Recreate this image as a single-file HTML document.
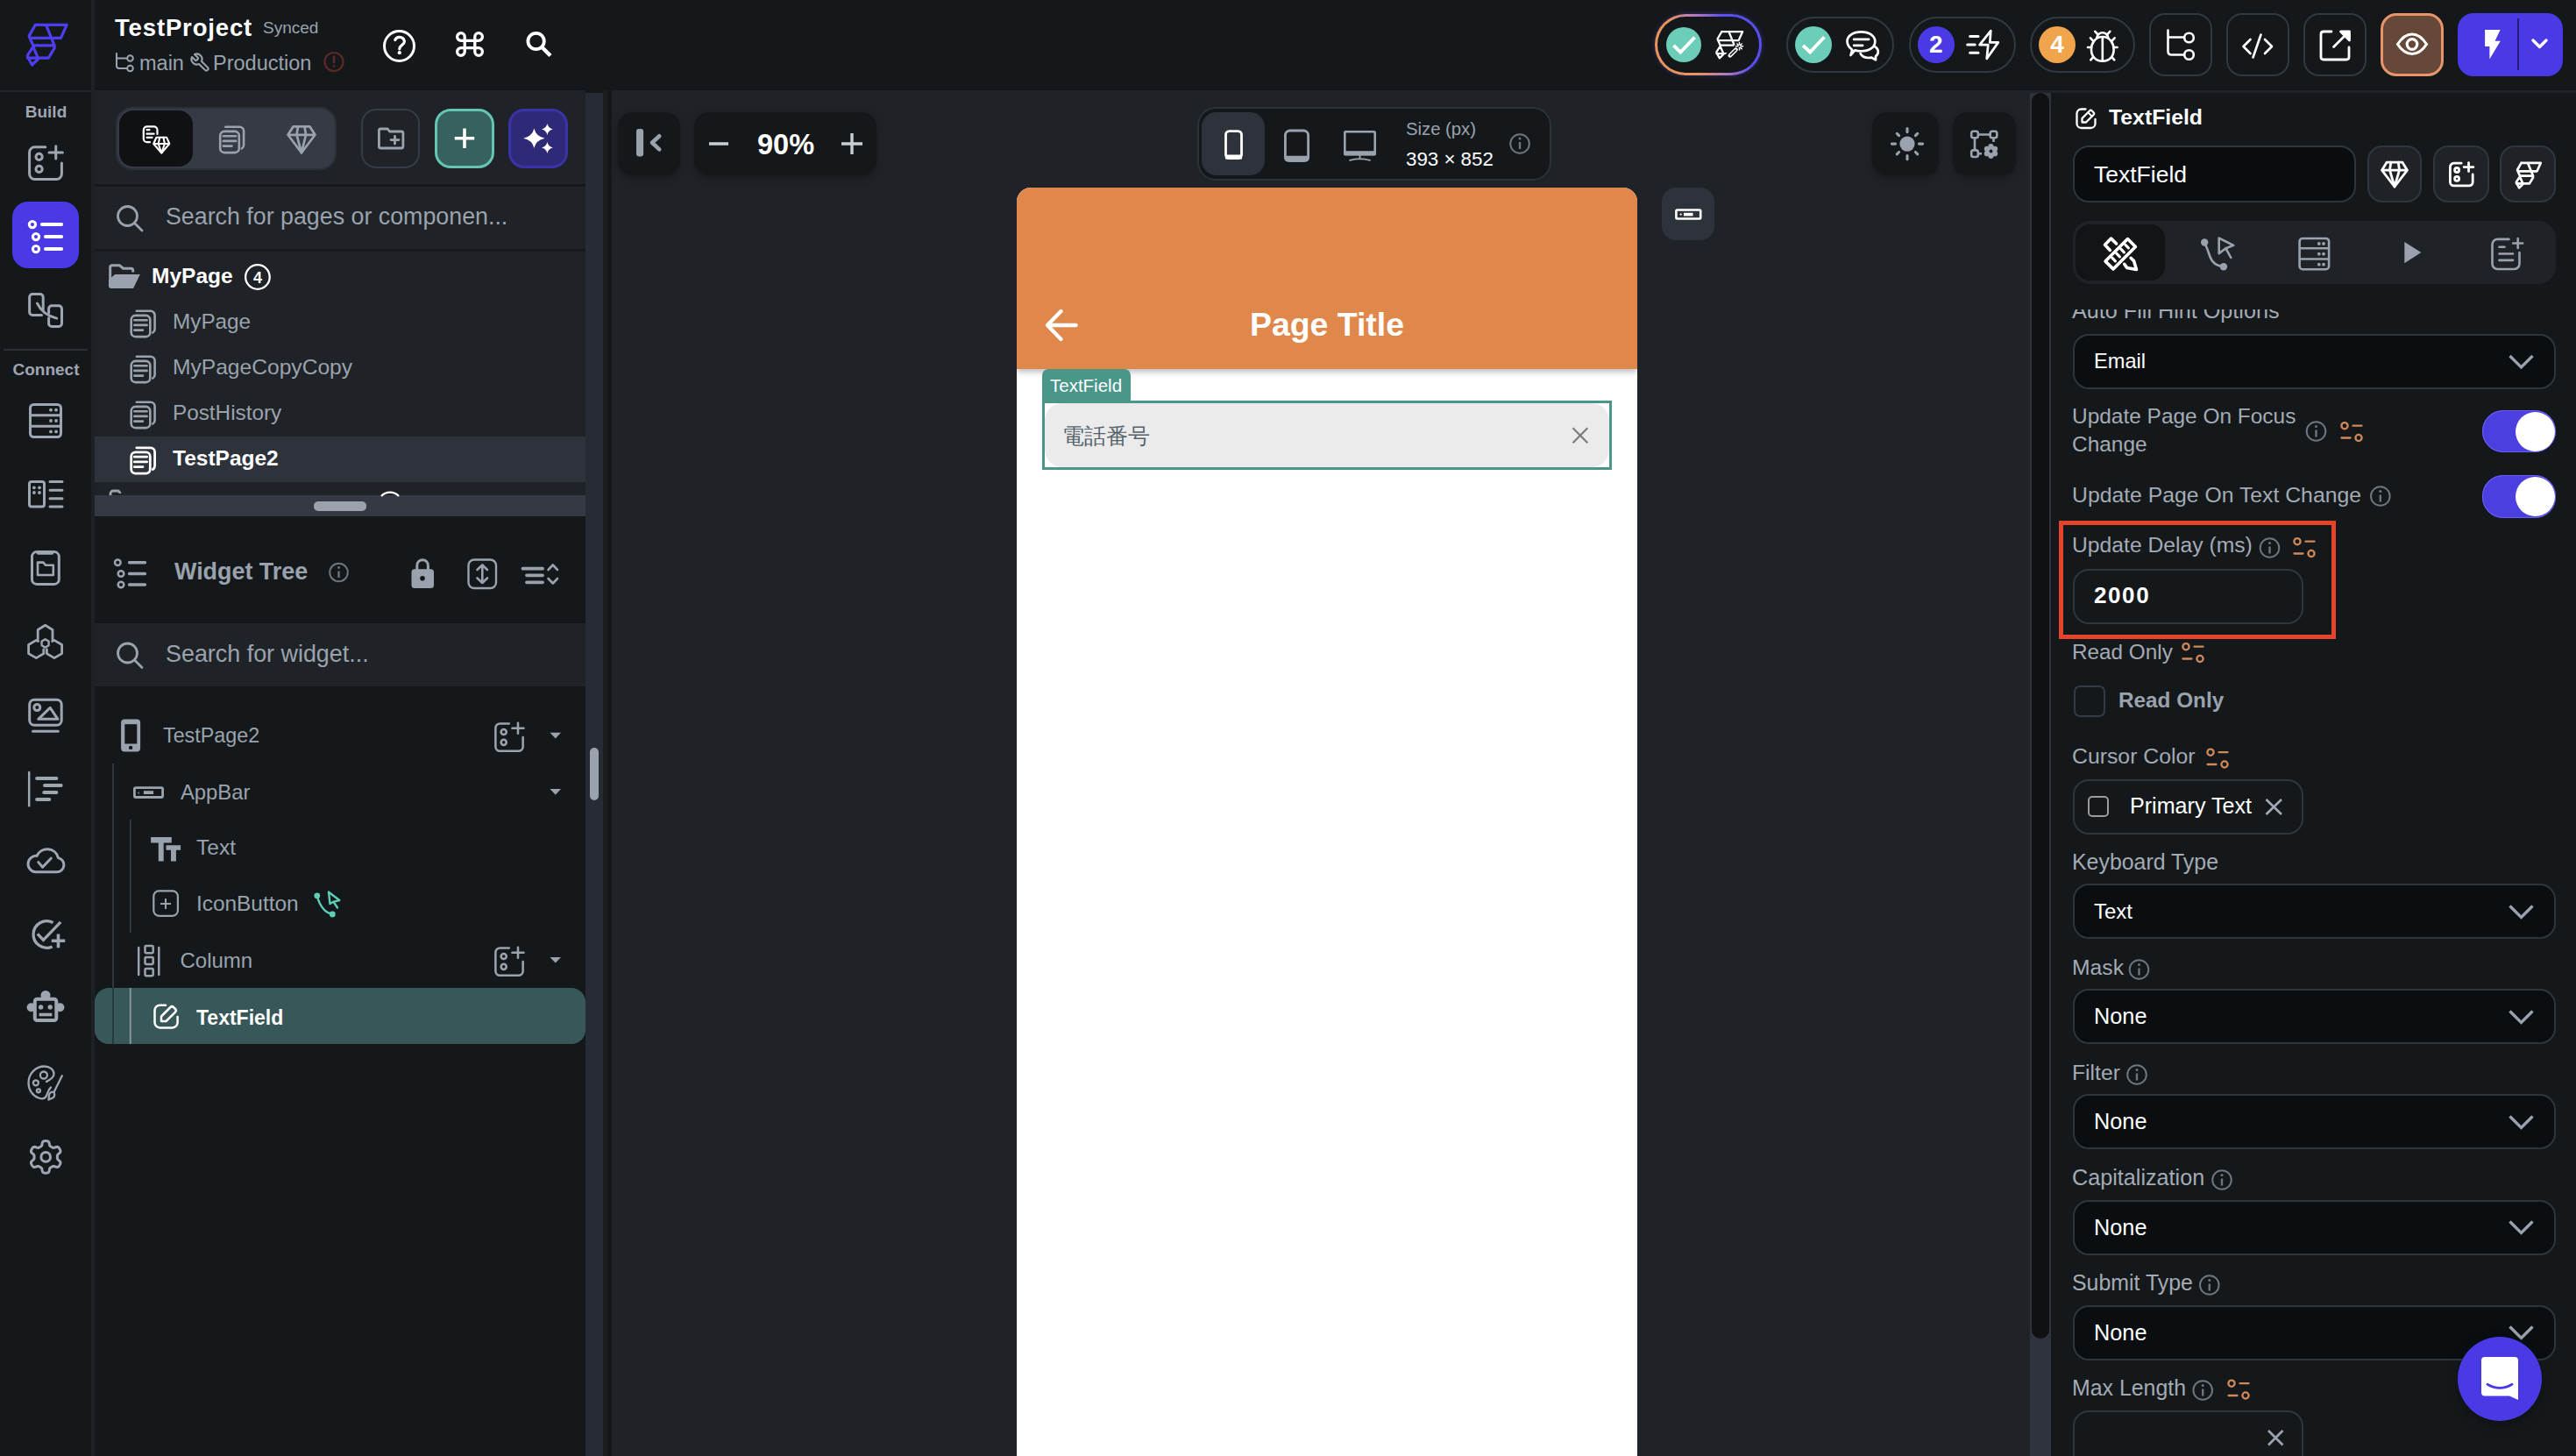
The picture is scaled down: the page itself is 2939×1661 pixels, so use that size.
<!DOCTYPE html>
<html><head><meta charset="utf-8">
<style>
*{box-sizing:border-box;margin:0;padding:0}
html,body{width:2939px;height:1661px;overflow:hidden;background:#15181b;font-family:"Liberation Sans",sans-serif;color:#fff}
.a{position:absolute}
.t{position:absolute;white-space:nowrap;line-height:1}
svg{position:absolute;overflow:visible}
.ic{fill:none;stroke:#9aa3ad;stroke-width:2.6;stroke-linecap:round;stroke-linejoin:round}
.icw{fill:none;stroke:#fff;stroke-width:2.6;stroke-linecap:round;stroke-linejoin:round}
.btn{position:absolute;border-radius:18px}
.lbl{position:absolute;white-space:nowrap;line-height:1;color:#a3abb4;font-size:24px}
.dd{position:absolute;left:2364.5px;width:551px;height:63px;background:#0b0e11;border:2px solid #30353c;border-radius:18px}
.ddt{position:absolute;left:23px;top:20px;font-size:25px;color:#fff;line-height:1;white-space:nowrap}
</style></head><body>

<!-- backgrounds -->
<div class="a" style="left:0;top:0;width:2939px;height:103px;background:#15181b"></div>
<div class="a" style="left:104px;top:0;width:4px;height:1661px;background:#1d2024"></div>
<div class="a" style="left:0;top:103px;width:104px;height:2px;background:#23272c"></div>
<!-- pages panel -->
<div class="a" style="left:108px;top:103px;width:560px;height:462px;background:#1f2226"></div>
<div class="a" style="left:108px;top:565px;width:560px;height:24px;background:#343944"></div>
<div class="a" style="left:108px;top:589px;width:560px;height:1072px;background:#15181b"></div>
<div class="a" style="left:108px;top:711px;width:560px;height:72px;background:#1f2327"></div>
<!-- left scroll strip -->
<div class="a" style="left:668px;top:106px;width:20px;height:1555px;background:#272b34"></div>
<div class="a" style="left:688px;top:103px;width:4.5px;height:1558px;background:#1c1f22"></div>
<!-- canvas -->
<div class="a" style="left:698px;top:103px;width:1618px;height:1558px;background:#1f2226"></div>
<!-- right scroll strip -->
<div class="a" style="left:2316px;top:103px;width:24px;height:3px;background:#1f2226"></div><div class="a" style="left:2316px;top:106px;width:24px;height:1555px;background:#2e333c"></div>
<div class="a" style="left:2318px;top:106px;width:20px;height:1421px;background:#0f1113;border-radius:10px"></div>
<!-- right panel -->
<div class="a" style="left:2340px;top:103px;width:599px;height:1558px;background:#15181b"></div>
<div class="a" style="left:2340px;top:103px;width:599px;height:3px;background:#1f2226"></div>



<!-- ===== RAIL ===== -->
<div class="t" style="left:0;top:117.9px;width:104px;text-align:center;font-size:19px;font-weight:bold;color:#9ea6b1;padding-left:1px">Build</div>
<svg style="left:0;top:0" width="10" height="10"><g fill="none" stroke="#9ea6b1" stroke-width="3" stroke-linecap="round" stroke-linejoin="round">
<path d="M51.8 167.7H39.6a6 6 0 0 0-6 6V198.5a6 6 0 0 0 6 6H64.4a6 6 0 0 0 6-6V186"/><circle cx="44.6" cy="178.9" r="3.6"/><circle cx="44.6" cy="192.9" r="3.6"/><path d="M63.75 166.8V181M56 173.9H71.4"/></g></svg>
<div class="a" style="left:14px;top:230px;width:76px;height:76px;border-radius:18px;background:#4a3ae6"></div>
<svg style="left:0;top:0" width="10" height="10"><g fill="none" stroke="#fff" stroke-linecap="round"><circle cx="36.95" cy="256.1" r="3.6" stroke-width="3.1"/><circle cx="41" cy="270.1" r="3.6" stroke-width="3.1"/><circle cx="41" cy="284.1" r="3.6" stroke-width="3.1"/><path d="M48 256H70.1M52 270H70.1M52 284H70.1" stroke-width="4.1"/></g></svg>
<svg style="left:0;top:0" width="10" height="10"><g fill="none" stroke="#9ea6b1" stroke-width="3" stroke-linecap="round" stroke-linejoin="round">
<path d="M49.2 353.4V339a3.5 3.5 0 0 0-3.5-3.5H37.15a3.5 3.5 0 0 0-3.5 3.5V355.9a3.5 3.5 0 0 0 3.5 3.5H47.5"/>
<path d="M55.6 357V352.3a3.5 3.5 0 0 1 3.5-3.5H67a3.5 3.5 0 0 1 3.5 3.5V368.9a3.5 3.5 0 0 1-3.5 3.5H59.1a3.5 3.5 0 0 1-3.5-3.5V362.7"/>
<path d="M42.5 346.2Q49 359.5 64.6 363.1"/></g></svg>
<div class="a" style="left:4px;top:398px;width:96px;height:2px;background:#2c3036"></div>
<div class="t" style="left:0;top:411.9px;width:104px;text-align:center;font-size:19px;font-weight:bold;color:#9ea6b1;padding-left:1px">Connect</div>
<svg style="left:0;top:0" width="10" height="10"><g fill="none" stroke="#9ea6b1" stroke-width="3" stroke-linecap="round" stroke-linejoin="round">
<rect x="34.5" y="461.5" width="35" height="37" rx="4"/><path d="M34.5 473.8H69.5M34.5 486.2H69.5"/></g>
<g fill="#9ea6b1"><circle cx="58" cy="467.7" r="1.9"/><circle cx="64" cy="467.7" r="1.9"/><circle cx="58" cy="480" r="1.9"/><circle cx="64" cy="480" r="1.9"/><circle cx="58" cy="492.4" r="1.9"/><circle cx="64" cy="492.4" r="1.9"/></g></svg>
<svg style="left:0;top:0" width="10" height="10"><g fill="none" stroke="#9ea6b1" stroke-width="3" stroke-linecap="round" stroke-linejoin="round">
<rect x="33.5" y="549.5" width="17" height="28.5" rx="2.5"/><path d="M57 549.5H71M57 559.2H71M57 568.8H71M57 578H71"/></g>
<g fill="#9ea6b1"><circle cx="38.9" cy="556.3" r="1.9"/><circle cx="45" cy="556.3" r="1.9"/><circle cx="38.9" cy="562" r="1.9"/><circle cx="45" cy="562" r="1.9"/></g></svg>
<svg style="left:0;top:0" width="10" height="10"><g fill="none" stroke="#9ea6b1" stroke-width="3" stroke-linecap="round" stroke-linejoin="round">
<rect x="36.5" y="629.6" width="30.8" height="36.8" rx="5.5"/><path d="M43.5 631H59.5" stroke-width="3.5"/><path d="M43 641.6H49.5L52 644.8H60.8V656H43Z" stroke-width="2.6"/></g></svg>
<svg style="left:0;top:0" width="10" height="10"><g fill="none" stroke="#9ea6b1" stroke-width="2.8" stroke-linecap="round" stroke-linejoin="round">
<path d="M43.2 729.5V718.5L51.6 713.3L60 718.5V729.5"/>
<path d="M43.6 731.6L41.3 730.4L32.6 735.5V745.6L41.3 750.6L49.8 745.6V740.8"/>
<path d="M59.6 731.6L61.9 730.4L70.6 735.5V745.6L61.9 750.6L53.4 745.6V740.8"/>
<path d="M51.6 729.3L55.6 731.6V736.3L51.6 738.6L47.6 736.3V731.6Z" stroke-width="2.4"/></g></svg>
<svg style="left:0;top:0" width="10" height="10"><g fill="none" stroke="#9ea6b1" stroke-width="3" stroke-linecap="round" stroke-linejoin="round">
<rect x="33.7" y="798.2" width="36.5" height="29.1" rx="5.5"/><circle cx="42.3" cy="807.1" r="3.5"/><path d="M43.75 820.3L57.2 807.3L65.9 820.3Z"/><path d="M37.5 834.2H66.3"/></g></svg>
<svg style="left:0;top:0" width="10" height="10"><g fill="none" stroke="#9ea6b1" stroke-linecap="round">
<path d="M33.2 880.9V919.3" stroke-width="2.5"/><path d="M42.1 887.9H64.4M51 896H69.7M50.2 904H64.4M42.1 911.9H56.25" stroke-width="4"/></g></svg>
<svg style="left:0;top:0" width="10" height="10"><g fill="none" stroke="#9ea6b1" stroke-width="3" stroke-linecap="round" stroke-linejoin="round">
<path d="M40.5 994.8H64.5a8.2 8.2 0 0 0 2-16.2a13 13 0 0 0-24.5-2.2a9.2 9.2 0 0 0-1.5 18.4Z"/><path d="M43.75 983.6L48.6 989.3L58.2 979.2"/></g></svg>
<svg style="left:0;top:0" width="10" height="10"><g fill="none" stroke="#9ea6b1" stroke-width="3.3" stroke-linejoin="miter">
<path d="M60.5 1052.5A15.3 15.3 0 1 0 59.6 1080"/><path d="M42.8 1065.3L49.5 1072.3L69.2 1051.8"/><path d="M66.5 1065.5V1081.2M58.8 1073.3H74.2" stroke-width="3.6"/></g></svg>
<svg style="left:0;top:0" width="10" height="10"><g fill="#9ea6b1"><circle cx="35.6" cy="1149.2" r="5"/><circle cx="68.4" cy="1149.2" r="5"/><circle cx="52" cy="1135.5" r="5.5"/></g>
<rect x="39.8" y="1139.8" width="24.5" height="24.2" rx="2.5" fill="#15181b" stroke="#9ea6b1" stroke-width="4"/>
<g fill="#9ea6b1"><circle cx="46.6" cy="1148.9" r="2.7"/><circle cx="57.2" cy="1148.9" r="2.7"/><rect x="44.6" y="1155.7" width="14.8" height="3.6"/></g></svg>
<svg style="left:0;top:0" width="10" height="10"><g fill="none" stroke="#9ea6b1" stroke-width="2.3" stroke-linecap="round" stroke-linejoin="round">
<path d="M58 1240.5c-3 2.5-3.5 6-5 9.5-1.5 3.5-5 4-9 2.5-7-2.7-11.5-9.5-11.5-17 0-11 8.5-19 18-19 6 0 11 3.5 11 8.5 0 5.5-5.5 6.5-8.5 9"/>
<circle cx="49.9" cy="1226.5" r="4"/><circle cx="40.9" cy="1235.3" r="3"/><circle cx="43.9" cy="1244.3" r="2"/>
<path d="M70.8 1227.3L61.5 1246M61.5 1246c-2.5-1-5 .5-5.5 3l-.5 5.5 4.5-2c2-1 3-3 1.5-6.5"/></g></svg>
<svg style="left:0;top:0" width="10" height="10"><g fill="none" stroke="#9ea6b1" stroke-width="3" stroke-linejoin="round"><path d="M52.20 1301.60 L52.68 1301.61 L53.16 1301.64 L53.63 1301.69 L54.10 1301.78 L54.57 1301.91 L55.02 1302.12 L55.43 1302.46 L55.80 1302.98 L56.08 1303.74 L56.28 1304.69 L56.43 1305.63 L56.59 1306.39 L56.79 1306.93 L57.04 1307.29 L57.31 1307.56 L57.60 1307.77 L57.90 1307.95 L58.20 1308.13 L58.50 1308.30 L58.80 1308.47 L59.10 1308.64 L59.40 1308.82 L59.70 1308.99 L60.01 1309.16 L60.33 1309.30 L60.70 1309.41 L61.14 1309.44 L61.70 1309.34 L62.45 1309.10 L63.34 1308.76 L64.25 1308.46 L65.05 1308.33 L65.69 1308.38 L66.19 1308.57 L66.59 1308.86 L66.94 1309.19 L67.25 1309.56 L67.54 1309.94 L67.80 1310.34 L68.05 1310.75 L68.28 1311.17 L68.49 1311.60 L68.68 1312.04 L68.84 1312.49 L68.96 1312.96 L69.00 1313.45 L68.92 1313.98 L68.65 1314.56 L68.13 1315.18 L67.41 1315.82 L66.67 1316.43 L66.09 1316.95 L65.73 1317.39 L65.54 1317.79 L65.45 1318.16 L65.41 1318.51 L65.40 1318.86 L65.40 1319.21 L65.40 1319.55 L65.40 1319.90 L65.40 1320.25 L65.40 1320.59 L65.40 1320.94 L65.41 1321.29 L65.45 1321.64 L65.54 1322.01 L65.73 1322.41 L66.09 1322.85 L66.67 1323.37 L67.41 1323.98 L68.13 1324.62 L68.65 1325.24 L68.92 1325.82 L69.00 1326.35 L68.96 1326.84 L68.84 1327.31 L68.68 1327.76 L68.49 1328.20 L68.28 1328.63 L68.05 1329.05 L67.80 1329.46 L67.54 1329.86 L67.25 1330.24 L66.94 1330.61 L66.59 1330.94 L66.19 1331.23 L65.69 1331.42 L65.05 1331.47 L64.25 1331.34 L63.34 1331.04 L62.45 1330.70 L61.70 1330.46 L61.14 1330.36 L60.70 1330.39 L60.33 1330.50 L60.01 1330.64 L59.70 1330.81 L59.40 1330.98 L59.10 1331.16 L58.80 1331.33 L58.50 1331.50 L58.20 1331.67 L57.90 1331.85 L57.60 1332.03 L57.31 1332.24 L57.04 1332.51 L56.79 1332.87 L56.59 1333.41 L56.43 1334.17 L56.28 1335.11 L56.08 1336.06 L55.80 1336.82 L55.43 1337.34 L55.02 1337.68 L54.57 1337.89 L54.10 1338.02 L53.63 1338.11 L53.16 1338.16 L52.68 1338.19 L52.20 1338.20 L51.72 1338.19 L51.24 1338.16 L50.77 1338.11 L50.30 1338.02 L49.83 1337.89 L49.38 1337.68 L48.97 1337.34 L48.60 1336.82 L48.32 1336.06 L48.12 1335.11 L47.97 1334.17 L47.81 1333.41 L47.61 1332.87 L47.36 1332.51 L47.09 1332.24 L46.80 1332.03 L46.50 1331.85 L46.20 1331.67 L45.90 1331.50 L45.60 1331.33 L45.30 1331.16 L45.00 1330.98 L44.70 1330.81 L44.39 1330.64 L44.07 1330.50 L43.70 1330.39 L43.26 1330.36 L42.70 1330.46 L41.95 1330.70 L41.06 1331.04 L40.15 1331.34 L39.35 1331.47 L38.71 1331.42 L38.21 1331.23 L37.81 1330.94 L37.46 1330.61 L37.15 1330.24 L36.86 1329.86 L36.60 1329.46 L36.35 1329.05 L36.12 1328.63 L35.91 1328.20 L35.72 1327.76 L35.56 1327.31 L35.44 1326.84 L35.40 1326.35 L35.48 1325.82 L35.75 1325.24 L36.27 1324.62 L36.99 1323.98 L37.73 1323.37 L38.31 1322.85 L38.67 1322.41 L38.86 1322.01 L38.95 1321.64 L38.99 1321.29 L39.00 1320.94 L39.00 1320.59 L39.00 1320.25 L39.00 1319.90 L39.00 1319.55 L39.00 1319.21 L39.00 1318.86 L38.99 1318.51 L38.95 1318.16 L38.86 1317.79 L38.67 1317.39 L38.31 1316.95 L37.73 1316.43 L36.99 1315.82 L36.27 1315.18 L35.75 1314.56 L35.48 1313.98 L35.40 1313.45 L35.44 1312.96 L35.56 1312.49 L35.72 1312.04 L35.91 1311.60 L36.12 1311.17 L36.35 1310.75 L36.60 1310.34 L36.86 1309.94 L37.15 1309.56 L37.46 1309.19 L37.81 1308.86 L38.21 1308.57 L38.71 1308.38 L39.35 1308.33 L40.15 1308.46 L41.06 1308.76 L41.95 1309.10 L42.70 1309.34 L43.26 1309.44 L43.70 1309.41 L44.07 1309.30 L44.39 1309.16 L44.70 1308.99 L45.00 1308.82 L45.30 1308.64 L45.60 1308.47 L45.90 1308.30 L46.20 1308.13 L46.50 1307.95 L46.80 1307.77 L47.09 1307.56 L47.36 1307.29 L47.61 1306.93 L47.81 1306.39 L47.97 1305.63 L48.12 1304.69 L48.32 1303.74 L48.60 1302.98 L48.97 1302.46 L49.38 1302.12 L49.83 1301.91 L50.30 1301.78 L50.77 1301.69 L51.24 1301.64 L51.72 1301.61Z"/><circle cx="52.2" cy="1319.9" r="5.3"/></g></svg>


<!-- ===== PAGES PANEL ===== -->
<div class="a" style="left:132px;top:122px;width:252px;height:72px;border-radius:19px;background:#353a45;border:2px solid #2b2f37"></div>
<div class="a" style="left:136px;top:126px;width:84px;height:63.5px;border-radius:16px;background:#0f1113"></div>
<svg style="left:0;top:0" width="10" height="10">
<g fill="none" stroke="#fff" stroke-width="2.2" stroke-linecap="round" stroke-linejoin="round">
<path d="M171 162.2H167.8a4 4 0 0 1-4-4V148.4a4 4 0 0 1 4-4H175.5a4 4 0 0 1 4 4V153"/>
<path d="M167.5 148.2H170.5M167.5 152.7H175.6M167.5 156.8H173.5"/></g>
<g fill="none" stroke="#fff" stroke-width="2.1" stroke-linejoin="round" stroke-linecap="round">
<path d="M178.4 156.8H190.2L193.3 164L184.25 174.5L175.2 164Z M175.2 164H193.3"/>
<path d="M182.2 156.8L180.7 164L184.25 174.5L187.9 164L186.4 156.8"/></g>
<g fill="none" stroke="#9aa3ad" stroke-width="2.6" stroke-linecap="round" stroke-linejoin="round">
<rect x="251.2" y="149.9" width="21.6" height="24.2" rx="4.8"/>
<path d="M257.3 144.8H273.3a4.8 4.8 0 0 1 4.8 4.8V165.5a4.8 4.8 0 0 1-2.3 4"/>
<path d="M254.8 155.2H269.1M254.8 160.9H269.1M254.8 166.6H264.5"/></g>
<g fill="none" stroke="#9aa3ad" stroke-width="2.7" stroke-linejoin="round" stroke-linecap="round">
<path d="M334.5 144.4H353.5L359.5 153.8L344.0 174.3L328.5 153.8Z M328.5 153.8H359.5"/>
<path d="M340 144.4L338.5 153.8L344.0 174.3L349.0 153.8L347.5 144.4"/></g>
</svg>
<div class="a" style="left:412.3px;top:124.2px;width:67px;height:67.5px;border-radius:17px;border:2.8px solid #363b45;background:#1f2327"></div>
<svg style="left:0;top:0" width="10" height="10"><g fill="none" stroke="#9aa3ad" stroke-width="2.8" stroke-linejoin="round" stroke-linecap="round">
<path d="M442.2 147H434.4a2 2 0 0 0-2 2V167a2 2 0 0 0 2 2H457.9a2 2 0 0 0 2-2V152a2 2 0 0 0-2-2H444.5Z"/><path d="M450.5 155.3V164M446 159.6H455"/></g></svg>
<div class="a" style="left:496.2px;top:124.2px;width:67.6px;height:67.5px;border-radius:18px;border:3px solid #64c5b3;background:#37615e"></div>
<svg style="left:0;top:0" width="10" height="10"><path d="M530 146.5V169M518.8 157.7H541.2" stroke="#fff" stroke-width="3.6"/></svg>
<div class="a" style="left:580.4px;top:124.2px;width:67.2px;height:67.5px;border-radius:18px;border:3.5px solid #3a33a8;background:#2f2a78"></div>
<svg style="left:0;top:0" width="10" height="10"><g fill="#fff"><path d="M609.4 146.5Q611.596 155.684 621.6 157.7Q611.596 159.71599999999998 609.4 168.89999999999998Q607.204 159.71599999999998 597.1999999999999 157.7Q607.204 155.684 609.4 146.5Z"/><path d="M624.4 141.1Q625.552 146.348 630.8 147.5Q625.552 148.652 624.4 153.9Q623.2479999999999 148.652 618.0 147.5Q623.2479999999999 146.348 624.4 141.1Z"/><path d="M624.4 162.1Q625.552 167.348 630.8 168.5Q625.552 169.652 624.4 174.9Q623.2479999999999 169.652 618.0 168.5Q623.2479999999999 167.348 624.4 162.1Z"/></g></svg>
<div class="a" style="left:108px;top:210px;width:560px;height:2.5px;background:#16191c"></div>
<svg style="left:0;top:0" width="10" height="10"><g fill="none" stroke="#9aa3ad" stroke-width="2.8" stroke-linecap="round"><circle cx="145.5" cy="246.5" r="11"/><path d="M153.5 254.5L162 263"/></g></svg>
<div class="t" style="left:189px;top:234.3px;font-size:26.8px;color:#9aa3ad">Search for pages or componen...</div>
<div class="a" style="left:108px;top:284px;width:560px;height:2.5px;background:#16191c"></div>
<svg style="left:0;top:0" width="10" height="10">
<path d="M125.7 322.5V305a2.2 2.2 0 0 1 2.2-2.2H136.3L140.6 306.2H149.5a2.2 2.2 0 0 1 2.2 2.2V310.5" fill="none" stroke="#9aa3ad" stroke-width="3" stroke-linejoin="round"/>
<path d="M124 319L131.2 313H159.8L152.1 328.9H126.5Q124 328.9 124 326.5Z" fill="#9aa3ad"/>
<circle cx="293.9" cy="316" r="13.8" fill="none" stroke="#fff" stroke-width="2.3"/></svg>
<div class="t" style="left:173px;top:303px;font-size:24.5px;font-weight:bold">MyPage</div>
<div class="t" style="left:283.9px;top:307.7px;width:20px;text-align:center;font-size:18px;font-weight:bold">4</div>
<svg style="left:0;top:0" width="10" height="10"><g fill="none" stroke="#9aa3ad" stroke-width="2.6" stroke-linecap="round" stroke-linejoin="round">
<rect x="149.7" y="359.9" width="21.6" height="24.2" rx="4.8"/>
<path d="M155.8 354.8H171.8a4.8 4.8 0 0 1 4.8 4.8V375.5a4.8 4.8 0 0 1-2.3 4"/>
<path d="M153.3 365.2H167.6M153.3 370.9H167.6M153.3 376.6H163.0"/></g><g fill="none" stroke="#9aa3ad" stroke-width="2.6" stroke-linecap="round" stroke-linejoin="round">
<rect x="149.7" y="411.9" width="21.6" height="24.2" rx="4.8"/>
<path d="M155.8 406.8H171.8a4.8 4.8 0 0 1 4.8 4.8V427.5a4.8 4.8 0 0 1-2.3 4"/>
<path d="M153.3 417.2H167.6M153.3 422.9H167.6M153.3 428.6H163.0"/></g><g fill="none" stroke="#9aa3ad" stroke-width="2.6" stroke-linecap="round" stroke-linejoin="round">
<rect x="149.7" y="463.9" width="21.6" height="24.2" rx="4.8"/>
<path d="M155.8 458.8H171.8a4.8 4.8 0 0 1 4.8 4.8V479.5a4.8 4.8 0 0 1-2.3 4"/>
<path d="M153.3 469.2H167.6M153.3 474.9H167.6M153.3 480.6H163.0"/></g></svg>
<div class="t" style="left:197px;top:355.4px;font-size:24.3px;color:#9aa3ad">MyPage</div>
<div class="t" style="left:197px;top:407px;font-size:24.6px;color:#9aa3ad">MyPageCopyCopy</div>
<div class="t" style="left:197px;top:459px;font-size:24.3px;color:#9aa3ad">PostHistory</div>
<div class="a" style="left:108px;top:498px;width:560px;height:51.5px;background:#2e333b"></div>
<svg style="left:0;top:0" width="10" height="10"><g fill="none" stroke="#fff" stroke-width="2.8" stroke-linecap="round" stroke-linejoin="round">
<rect x="149.7" y="515.9" width="21.6" height="24.2" rx="4.8"/>
<path d="M155.8 510.8H171.8a4.8 4.8 0 0 1 4.8 4.8V531.5a4.8 4.8 0 0 1-2.3 4"/>
<path d="M153.3 521.2H167.6M153.3 526.9H167.6M153.3 532.6H163.0"/></g></svg>
<div class="t" style="left:197px;top:511px;font-size:24.5px;font-weight:bold">TestPage2</div>
<svg style="left:0;top:0" width="10" height="10"><path d="M126 565V563a3 3 0 0 1 3-3H134a3 3 0 0 1 3 3" fill="none" stroke="#9aa3ad" stroke-width="2.8"/><path d="M435 566a13.8 13.8 0 0 1 20 0" fill="none" stroke="#fff" stroke-width="2.3"/></svg>
<!-- drag handle -->
<div class="a" style="left:358px;top:572px;width:60px;height:10.5px;border-radius:5px;background:#9aa3ad"></div>


<!-- ===== WIDGET TREE ===== -->
<svg style="left:0;top:0" width="10" height="10"><g fill="none" stroke="#9aa3ad" stroke-linecap="round">
<circle cx="134.3" cy="641.8" r="3.3" stroke-width="2.5"/><circle cx="138" cy="654.5" r="3.3" stroke-width="2.5"/><circle cx="138" cy="667" r="3.3" stroke-width="2.5"/>
<path d="M147.5 641.8H165.5M147.5 654.5H165.5M147.5 667H165.5" stroke-width="3.4"/></g>
<circle cx="386.5" cy="653" r="10.3" fill="none" stroke="#6d757e" stroke-width="2"/><path d="M386.5 651.5V659" stroke="#6d757e" stroke-width="2.4"/><circle cx="386.5" cy="647.5" r="1.4" fill="#6d757e"/>
<path d="M475.8 651V645a6.3 6.3 0 0 1 12.6 0V651" fill="none" stroke="#9aa3ad" stroke-width="3"/>
<rect x="469.5" y="649.3" width="25.5" height="21.7" rx="3.5" fill="#9aa3ad"/><circle cx="482" cy="659.8" r="2.8" fill="#15181b"/>
<rect x="534.5" y="638.5" width="31.5" height="32.5" rx="6.5" fill="none" stroke="#9aa3ad" stroke-width="2.4"/>
<path d="M550.3 644.5V665M544.5 650L550.3 644.5L556 650M544.5 659.5L550.3 665L556 659.5" fill="none" stroke="#9aa3ad" stroke-width="2.6" stroke-linecap="round" stroke-linejoin="round"/>
<path d="M596.5 648.7H619M601 656.3H619M601 664.3H619" fill="none" stroke="#9aa3ad" stroke-width="3.8" stroke-linecap="round"/>
<path d="M625.5 650L630.8 644.5L636 650M625.5 660L630.8 665.5L636 660" fill="none" stroke="#9aa3ad" stroke-width="2.6" stroke-linecap="round" stroke-linejoin="round"/>
</svg>
<div class="t" style="left:199px;top:639.2px;font-size:26.9px;font-weight:bold;color:#9aa3ad">Widget Tree</div>
<svg style="left:0;top:0" width="10" height="10"><g fill="none" stroke="#9aa3ad" stroke-width="2.8" stroke-linecap="round"><circle cx="145.5" cy="745" r="11"/><path d="M153.5 753L162 761.5"/></g></svg>
<div class="t" style="left:189px;top:733.2px;font-size:26.9px;color:#9aa3ad">Search for widget...</div>

<svg style="left:0;top:0" width="10" height="10">
<rect x="138.1" y="820.4" width="22" height="37.1" rx="4" fill="#9aa3ad"/><rect x="142.3" y="826.2" width="14" height="22.3" fill="#15181b"/><circle cx="149.1" cy="852.9" r="2.2" fill="#15181b"/>
<g transform="translate(564 824) scale(0.85)"><g fill="none" stroke="#9aa3ad" stroke-width="3" stroke-linecap="round" stroke-linejoin="round">
<path d="M19.8 1.7H7.6a6 6 0 0 0-6 6V32.5a6 6 0 0 0 6 6H32.4a6 6 0 0 0 6-6V20"/><circle cx="12.6" cy="12.9" r="3.6"/><circle cx="12.6" cy="26.9" r="3.6"/><path d="M31.75 0.8V15M24 7.9H39.4"/></g></g>
<path d="M627.5 835.8H640L633.75 842.5Z" fill="#9aa3ad"/>
<path d="M129 871V1127" stroke="#3a3f46" stroke-width="1.6"/>
<rect x="153.4" y="898.6" width="32.2" height="10.9" rx="1.5" fill="none" stroke="#9aa3ad" stroke-width="2.8"/><rect x="163.9" y="902.2" width="11.2" height="3.8" fill="#9aa3ad"/><path d="M159 903.5l-1.5 1 1.5 1" fill="none" stroke="#9aa3ad" stroke-width="0.9"/>
<path d="M627.5 900H640L633.75 906.75Z" fill="#9aa3ad"/>
<path d="M148.75 935V1064" stroke="#3a3f46" stroke-width="1.6"/>
<path d="M172.1 955H195.8V961.4H186.7V982.4H180.8V961.4H172.1ZM189.5 964.2H206.1V969.7H200.9V982.4H195V969.7H189.5Z" fill="#9aa3ad"/>
<rect x="175.3" y="1016.4" width="27.6" height="28.4" rx="6" fill="none" stroke="#9aa3ad" stroke-width="2.2"/><path d="M189 1025V1037M183 1030.9H195" stroke="#9aa3ad" stroke-width="2"/>
<g fill="none" stroke="#5ccfb5" stroke-width="2.4" stroke-linecap="round" stroke-linejoin="round"><path d="M361.8 1021.8Q364 1032 370 1038Q374 1042 379.3 1043"/><path d="M375 1017.8L387.3 1027L380.5 1028.8L385 1035.5"/><path d="M375 1017.8L376.5 1031L380.5 1028.8"/></g>
<circle cx="361.8" cy="1021.8" r="3.4" fill="#5ccfb5"/><circle cx="379.3" cy="1043" r="3.4" fill="#5ccfb5"/>
<g fill="none" stroke="#9aa3ad" stroke-width="2.5" stroke-linecap="round"><path d="M158.2 1081.1V1112M181.3 1081.1V1112"/><rect x="165.5" y="1079" width="9.2" height="8.2" rx="1.2"/><rect x="165.5" y="1092" width="9.2" height="8" rx="1.2"/><rect x="165.5" y="1105" width="9.2" height="8.3" rx="1.2"/></g>
<g transform="translate(564 1080) scale(0.85)"><g fill="none" stroke="#9aa3ad" stroke-width="3" stroke-linecap="round" stroke-linejoin="round">
<path d="M19.8 1.7H7.6a6 6 0 0 0-6 6V32.5a6 6 0 0 0 6 6H32.4a6 6 0 0 0 6-6V20"/><circle cx="12.6" cy="12.9" r="3.6"/><circle cx="12.6" cy="26.9" r="3.6"/><path d="M31.75 0.8V15M24 7.9H39.4"/></g></g>
<path d="M627.5 1092H640L633.75 1098.5Z" fill="#9aa3ad"/>
</svg>
<div class="t" style="left:186px;top:828.3px;font-size:23.3px;color:#9aa3ad">TestPage2</div>
<div class="t" style="left:206px;top:892.4px;font-size:23.8px;color:#9aa3ad">AppBar</div>
<div class="t" style="left:224px;top:955.3px;font-size:24.5px;color:#9aa3ad">Text</div>
<div class="t" style="left:224px;top:1019.3px;font-size:24.4px;color:#9aa3ad">IconButton</div>
<div class="t" style="left:205.5px;top:1083.7px;font-size:24px;color:#9aa3ad">Column</div>
<div class="a" style="left:108px;top:1127px;width:560px;height:64px;border-radius:16px;background:#385759"></div>
<svg style="left:0;top:0" width="10" height="10">
<path d="M129 1127V1191" stroke="#26393c" stroke-width="1.8"/><path d="M148.75 1127V1191" stroke="#8d9aa0" stroke-width="1.8"/>
<g fill="none" stroke="#fff" stroke-width="2.5" stroke-linecap="round" stroke-linejoin="round"><path d="M189 1146.7H182.5a6 6 0 0 0-6 6V1166.4a6 6 0 0 0 6 6H196.6a6 6 0 0 0 6-6V1160"/><path d="M184 1165V1159.5L194.5 1149a2.5 2.5 0 0 1 3.5 0L200 1151a2.5 2.5 0 0 1 0 3.5L189.5 1165Z"/></g>
</svg>
<div class="t" style="left:224px;top:1149.5px;font-size:23px;font-weight:bold">TextField</div>
<div class="a" style="left:673px;top:853px;width:10px;height:60px;border-radius:5px;background:#9aa3ad"></div>


<!-- ===== CANVAS ===== -->
<div class="a" style="left:704.5px;top:128px;width:71px;height:71.5px;border-radius:17px;background:#15181b;box-shadow:0 3px 8px rgba(0,0,0,0.25)"></div>
<svg style="left:0;top:0" width="10" height="10"><rect x="726" y="147" width="8.1" height="31.4" rx="2.8" fill="#9aa3ad"/><path d="M752.2 155.3L744 162.8L752.2 170.4" fill="none" stroke="#9aa3ad" stroke-width="4.6" stroke-linecap="round" stroke-linejoin="round"/></svg>
<div class="a" style="left:792px;top:128px;width:207.5px;height:71.5px;border-radius:17px;background:#15181b;box-shadow:0 3px 8px rgba(0,0,0,0.25)"></div>
<svg style="left:0;top:0" width="10" height="10"><path d="M809 164H831M960 164H984M972 152V176" stroke="#c9ced3" stroke-width="3.4"/></svg>
<div class="t" style="left:864px;top:148.5px;font-size:32.5px;font-weight:bold">90%</div>

<div class="a" style="left:1366px;top:121.5px;width:404px;height:84px;border-radius:21px;background:#15181b;border:2px solid #2d3138"></div>
<div class="a" style="left:1371px;top:128px;width:72px;height:72px;border-radius:17px;background:#2e333b"></div>
<svg style="left:0;top:0" width="10" height="10">
<rect x="1398.5" y="149.6" width="18" height="31" rx="4" fill="none" stroke="#fff" stroke-width="2.8"/><rect x="1398" y="176.5" width="19" height="5" fill="#fff"/>
<rect x="1466.4" y="149" width="26.2" height="34.3" rx="5.5" fill="none" stroke="#9aa3ad" stroke-width="2.8"/><path d="M1465 177.7H1494V180a4.7 4.7 0 0 1-4.7 4.7H1469.7A4.7 4.7 0 0 1 1465 180Z" fill="#9aa3ad"/>
<rect x="1534.3" y="150.3" width="34.4" height="26" rx="1" fill="none" stroke="#9aa3ad" stroke-width="2.6"/><rect x="1533" y="172.3" width="37" height="5" rx="1" fill="#9aa3ad"/>
<path d="M1551.5 177V181.3M1540 182.8Q1551.5 179.5 1563 182.8" fill="none" stroke="#9aa3ad" stroke-width="1.9" stroke-linecap="round"/>
<circle cx="1734" cy="164" r="10.8" fill="none" stroke="#6d757e" stroke-width="2"/><path d="M1734 162V170" stroke="#6d757e" stroke-width="2.4"/><circle cx="1734" cy="158" r="1.5" fill="#6d757e"/>
</svg>
<div class="t" style="left:1604px;top:136.8px;font-size:20.3px;color:#9aa3ad">Size (px)</div>
<div class="t" style="left:1604px;top:170.6px;font-size:22.3px;color:#fff">393 × 852</div>

<div class="a" style="left:2136px;top:128px;width:76px;height:71.5px;border-radius:17px;background:#15181b;box-shadow:0 3px 8px rgba(0,0,0,0.25)"></div>
<div class="a" style="left:2228px;top:128px;width:71.5px;height:71.5px;border-radius:17px;background:#15181b;box-shadow:0 3px 8px rgba(0,0,0,0.25)"></div>
<svg style="left:0;top:0" width="10" height="10">
<circle cx="2176" cy="164.1" r="8.6" fill="#9aa3ad"/><path d="M2189.50 164.10L2193.60 164.10M2185.40 173.50L2187.74 175.84M2176.00 177.60L2176.00 181.70M2166.60 173.50L2164.26 175.84M2162.50 164.10L2158.40 164.10M2166.60 154.70L2164.26 152.36M2176.00 150.60L2176.00 146.50M2185.40 154.70L2187.74 152.36" stroke="#9aa3ad" stroke-width="3.1" stroke-linecap="round"/>
<g fill="none" stroke="#9aa3ad" stroke-width="2.6"><rect x="2249.2" y="149.7" width="7.6" height="7.6" rx="2.2"/><rect x="2270.7" y="149.7" width="7.6" height="7.6" rx="2.2"/><rect x="2249.2" y="171.4" width="7.6" height="7.6" rx="2.2"/>
<path d="M2257 153.5H2270.5M2253 157.5V171.2M2274.5 157.5V162M2257 175.2H2261"/></g>
<g fill="#9aa3ad"><circle cx="2271.5" cy="172.5" r="6.3"/><circle cx="2271.50" cy="167.20" r="3.1"/><circle cx="2276.09" cy="169.85" r="3.1"/><circle cx="2276.09" cy="175.15" r="3.1"/><circle cx="2271.50" cy="177.80" r="3.1"/><circle cx="2266.91" cy="175.15" r="3.1"/><circle cx="2266.91" cy="169.85" r="3.1"/></g><circle cx="2271.5" cy="172.5" r="1.9" fill="#15181b"/>
</svg>

<div class="a" style="left:1896px;top:214px;width:59.5px;height:60px;border-radius:16px;background:#2e333b"></div>
<svg style="left:0;top:0" width="10" height="10"><rect x="1912.4" y="239.5" width="27.8" height="10" rx="1.2" fill="none" stroke="#fff" stroke-width="2.6"/><rect x="1921" y="242.8" width="10.5" height="3.6" fill="#fff"/><path d="M1916.5 244.5h2.5M1917.7 243.3v2.5" stroke="#fff" stroke-width="0.8"/></svg>

<!-- phone -->
<div class="a" style="left:1160px;top:214px;width:707.5px;height:1447px;background:#fff;border-radius:16px 16px 0 0;overflow:hidden">
  <div class="a" style="left:0;top:0;width:707.5px;height:207px;background:#e0874b;box-shadow:0 3px 7px rgba(0,0,0,0.28)"></div>
</div>
<svg style="left:0;top:0" width="10" height="10"><path d="M1227.5 371H1195M1210.5 355L1195 371L1210.5 387" fill="none" stroke="#fff" stroke-width="4.4" stroke-linecap="round" stroke-linejoin="round"/></svg>
<div class="t" style="left:1426px;top:352.3px;font-size:37.4px;font-weight:bold">Page Title</div>
<div class="a" style="left:1189px;top:421px;width:101px;height:38px;border-radius:7px 7px 0 0;background:#4a9688"></div>
<div class="t" style="left:1198px;top:429.6px;font-size:20.5px;color:#fff">TextField</div>
<div class="a" style="left:1189px;top:457px;width:650px;height:79px;border:3px solid #4a9688;background:#fff"></div>
<div class="a" style="left:1192px;top:460px;width:644px;height:73px;border-radius:20px;background:#ebebeb"></div>
<div class="t" style="left:1212px;top:486px;font-size:24.5px;color:#57636c">電話番号</div>
<svg style="left:0;top:0" width="10" height="10"><path d="M1794.5 488.3L1811.3 505.2M1811.3 488.3L1794.5 505.2" stroke="#7d7d7d" stroke-width="2.3"/></svg>


<!-- ===== RIGHT PANEL ===== -->
<svg style="left:0;top:0" width="10" height="10"><g fill="none" stroke="#fff" stroke-width="2.3" stroke-linecap="round" stroke-linejoin="round"><path d="M2379.5 124.5H2374.5a5 5 0 0 0-5 5V141a5 5 0 0 0 5 5H2385.5a5 5 0 0 0 5-5V136"/><path d="M2375.5 139.5V135L2384 126.5a2 2 0 0 1 2.8 0L2388.5 128.2a2 2 0 0 1 0 2.8L2380 139.5Z"/><path d="M2382.5 128.5L2386.5 132.5" stroke-width="1.8"/></g></svg>
<div class="t" style="left:2406px;top:121.5px;font-size:24.8px;color:#fff;font-weight:bold">TextField</div>
<div class="a" style="left:2364.5px;top:166px;width:323px;height:65px;border-radius:18px;background:#0a0d10;border:2px solid #30353c"></div>
<div class="t" style="left:2389px;top:185.6px;font-size:26.5px;color:#fff;font-weight:normal">TextField</div>
<div class="a" style="left:2700.5px;top:166px;width:62.5px;height:65px;border-radius:17px;background:#1f2327;border:2.5px solid #31363e"></div>
<div class="a" style="left:2776px;top:166px;width:63.5px;height:65px;border-radius:17px;background:#1f2327;border:2.5px solid #31363e"></div>
<div class="a" style="left:2852px;top:166px;width:63.5px;height:65px;border-radius:17px;background:#1f2327;border:2.5px solid #31363e"></div>
<svg style="left:0;top:0" width="10" height="10">
<g fill="none" stroke="#fff" stroke-width="2.8" stroke-linejoin="round" stroke-linecap="round"><path d="M2723 185.2H2741L2746.5 194.2L2732 213L2717.5 194.2Z M2717.5 194.2H2746.5"/><path d="M2727.8 185.2L2726.5 194.2L2732 213L2737.5 194.2L2736.3 185.2"/></g>
<g transform="translate(2794.3 185) scale(0.7)"><g fill="none" stroke="#fff" stroke-width="4" stroke-linecap="round" stroke-linejoin="round">
<path d="M19.8 1.7H7.6a6 6 0 0 0-6 6V32.5a6 6 0 0 0 6 6H32.4a6 6 0 0 0 6-6V20"/><circle cx="12.6" cy="12.9" r="3.6"/><circle cx="12.6" cy="26.9" r="3.6"/><path d="M31.75 0.8V15M24 7.9H39.4"/></g></g>
<g transform="translate(2851.5 168.4) scale(0.62)"><path d="M40.4 28.3H76.2L69.4 43.4H34L33.2 40.9L40.4 28.3M52.6 28.6L62.1 51.9V54.9L55.3 66.2H31.5V63L37.9 53.2V51.9L34 43.4M37.9 51.9H62.1M37.9 53.6L43.4 66.2M32.3 66.2L36.6 74L43.4 67.3" fill="none" stroke="#fff" stroke-width="4.3" stroke-linejoin="round" stroke-linecap="round"/></g>
</svg>
<div class="a" style="left:2364.5px;top:252px;width:551px;height:72px;border-radius:20px;background:#1f2327"></div>
<div class="a" style="left:2368px;top:256px;width:102px;height:64px;border-radius:16px;background:#131416"></div>
<svg style="left:0;top:0" width="10" height="10">
<g fill="none" stroke="#fff" stroke-width="3.6" stroke-linecap="round" stroke-linejoin="round">
<path d="M2402.1 298.1L2427.5 272.6L2436.4 281.5L2411 306.9Z"/><path d="M2409.8 294.2L2413.4 297.8M2414.8 289.2L2418.4 292.8M2419.8 284.2L2423.4 287.8M2424.8 279.2L2428.4 282.8" stroke-width="3.2"/>
<path d="M2407.3 285.4L2401.5 279.3L2408.6 272.1L2414.6 278"/>
<path d="M2431.1 294.3L2434.5 297.6L2437.5 307.5L2426.6 305.4L2423.7 301.3"/></g>
<g fill="none" stroke="#9aa3ad" stroke-width="2.6" stroke-linecap="round" stroke-linejoin="round"><path d="M2515.2 276.5Q2518.5 284 2521.5 293Q2525 303 2536.9 304.3"/><path d="M2531.7 271.6L2548.2 279.8L2539.5 283.3L2531.7 289.1Z"/><path d="M2539.5 283.3L2545.3 294"/></g>
<circle cx="2515.2" cy="276.5" r="4.2" fill="#9aa3ad"/><circle cx="2536.9" cy="304.3" r="4.2" fill="#9aa3ad"/>
<g fill="none" stroke="#9aa3ad" stroke-width="2.6"><rect x="2623.6" y="272" width="33.5" height="35.2" rx="3.5"/><path d="M2623.6 283.3H2657.1M2623.6 295.5H2657.1"/></g>
<g fill="#9aa3ad"><circle cx="2645.8" cy="278" r="1.9"/><circle cx="2651" cy="278" r="1.9"/><circle cx="2645.8" cy="289.7" r="1.9"/><circle cx="2651" cy="289.7" r="1.9"/><circle cx="2645.8" cy="301.7" r="1.9"/><circle cx="2651" cy="301.7" r="1.9"/></g>
<path d="M2743.3 275.9L2762.3 288.1L2743.3 300.2Z" fill="#9aa3ad"/>
<g fill="none" stroke="#9aa3ad" stroke-width="2.6" stroke-linecap="round" stroke-linejoin="round"><path d="M2862.5 272.9H2849.5a6 6 0 0 0-6 6V301a6 6 0 0 0 6 6H2868.5a6 6 0 0 0 6-6V288"/><path d="M2872.7 272V283M2867.2 277.5H2878.2M2851.5 281.7H2857.5M2851.5 289.5H2867M2851.5 296.9H2867"/></g>
</svg>
<div class="a" style="left:2340px;top:353px;width:599px;height:27px;overflow:hidden"><div class="t" style="left:24px;top:-10.6px;font-size:25.2px;color:#a3abb4">Auto Fill Hint Options</div></div>
<div class="dd" style="top:380.5px"></div><div class="t" style="left:2389px;top:400.5px;font-size:23.6px">Email</div>
<div class="t" style="left:2364px;top:463.3px;font-size:24.45px;color:#a3abb4;font-weight:normal">Update Page On Focus</div>
<div class="t" style="left:2364px;top:494.8px;font-size:24.45px;color:#a3abb4;font-weight:normal">Change</div>
<div class="t" style="left:2364px;top:553.0px;font-size:24.77px;color:#a3abb4;font-weight:normal">Update Page On Text Change</div>
<svg style="left:0;top:0" width="10" height="10"><path d="M2863.5 406.0L2876.5 419.0L2889.5 406.0" fill="none" stroke="#9aa3ad" stroke-width="3.3" stroke-linecap="butt" stroke-linejoin="miter"/><circle cx="2642.5" cy="492" r="10.8" fill="none" stroke="#6d757e" stroke-width="2"/><path d="M2642.5 490.5V498.5" stroke="#6d757e" stroke-width="2.4"/><circle cx="2642.5" cy="486.4" r="1.5" fill="#6d757e"/><g fill="none" stroke="#d0885a" stroke-width="2.3" stroke-linecap="round"><circle cx="2675" cy="485.7" r="3.6"/><path d="M2684.5 485.7H2694.5M2671.5 499.5H2681.5"/><circle cx="2691" cy="499.5" r="3.6"/></g><circle cx="2715.8" cy="566" r="10.8" fill="none" stroke="#6d757e" stroke-width="2"/><path d="M2715.8 564.5V572.5" stroke="#6d757e" stroke-width="2.4"/><circle cx="2715.8" cy="560.4" r="1.5" fill="#6d757e"/></svg>
<div class="a" style="left:2832px;top:468px;width:83.5px;height:48px;border-radius:24px;background:#4b3fe0;box-shadow:inset 0 0 0 1px #6a60f0"></div>
<div class="a" style="left:2870px;top:469.5px;width:45px;height:45px;border-radius:50%;background:#fff"></div>
<div class="a" style="left:2832px;top:542px;width:83.5px;height:48.5px;border-radius:24px;background:#4b3fe0;box-shadow:inset 0 0 0 1px #6a60f0"></div>
<div class="a" style="left:2870px;top:543.8px;width:45px;height:45px;border-radius:50%;background:#fff"></div>
<div class="a" style="left:2349px;top:593.75px;width:316px;height:135px;border:5.5px solid #e6432b"></div>
<div class="t" style="left:2364px;top:610.1px;font-size:24.7px;color:#a3abb4;font-weight:normal">Update Delay (ms)</div>
<div class="a" style="left:2364.5px;top:649px;width:263px;height:63px;border-radius:18px;background:#15181b;border:2px solid #30353c"></div>
<div class="t" style="left:2389px;top:666px;font-size:26px;font-weight:bold;letter-spacing:1.6px">2000</div>
<div class="t" style="left:2364px;top:731.9px;font-size:24.3px;color:#a3abb4;font-weight:normal">Read Only</div>
<div class="a" style="left:2366px;top:782px;width:36px;height:35.5px;border-radius:7px;border:2.5px solid #363b43"></div>
<div class="t" style="left:2417px;top:787.4px;font-size:24.3px;color:#9aa3ad;font-weight:bold">Read Only</div>
<div class="t" style="left:2364px;top:851.0px;font-size:24.8px;color:#a3abb4;font-weight:normal">Cursor Color</div>
<svg style="left:0;top:0" width="10" height="10"><circle cx="2589.5" cy="625" r="10.8" fill="none" stroke="#6d757e" stroke-width="2"/><path d="M2589.5 623.5V631.5" stroke="#6d757e" stroke-width="2.4"/><circle cx="2589.5" cy="619.4" r="1.5" fill="#6d757e"/><g fill="none" stroke="#d0885a" stroke-width="2.3" stroke-linecap="round"><circle cx="2621" cy="617.7" r="3.6"/><path d="M2630.5 617.7H2640.5M2617.5 631.5H2627.5"/><circle cx="2637" cy="631.5" r="3.6"/></g><g fill="none" stroke="#d0885a" stroke-width="2.3" stroke-linecap="round"><circle cx="2494" cy="737.7" r="3.6"/><path d="M2503.5 737.7H2513.5M2490.5 751.5H2500.5"/><circle cx="2510" cy="751.5" r="3.6"/></g><g fill="none" stroke="#d0885a" stroke-width="2.3" stroke-linecap="round"><circle cx="2522" cy="858.2" r="3.6"/><path d="M2531.5 858.2H2541.5M2518.5 872H2528.5"/><circle cx="2538" cy="872" r="3.6"/></g></svg>
<div class="a" style="left:2364.5px;top:889px;width:263px;height:63px;border-radius:18px;background:#15181b;border:2px solid #30353c"></div>
<div class="a" style="left:2382px;top:908px;width:24px;height:24px;border-radius:5px;border:2px solid #9c9c9c"></div>
<div class="t" style="left:2430px;top:906.8px;font-size:25.1px;color:#fff;font-weight:normal">Primary Text</div>
<svg style="left:0;top:0" width="10" height="10"><path d="M2585.5 912L2603 929M2603 912L2585.5 929" stroke="#a3abb4" stroke-width="2.6"/></svg>
<div class="t" style="left:2364px;top:971.4px;font-size:24.9px;color:#a3abb4;font-weight:normal">Keyboard Type</div>
<div class="dd" style="top:1008px"></div><div class="t" style="left:2389px;top:1027.7px;font-size:24px">Text</div>
<div class="t" style="left:2364px;top:1091.6px;font-size:24.7px;color:#a3abb4;font-weight:normal">Mask</div>
<div class="dd" style="top:1128px"></div><div class="t" style="left:2389px;top:1147.3px;font-size:25.3px">None</div>
<div class="t" style="left:2364px;top:1211.6px;font-size:24.7px;color:#a3abb4;font-weight:normal">Filter</div>
<div class="dd" style="top:1248px"></div><div class="t" style="left:2389px;top:1267.3px;font-size:25.3px">None</div>
<div class="t" style="left:2364px;top:1330.7px;font-size:25.2px;color:#a3abb4;font-weight:normal">Capitalization</div>
<div class="dd" style="top:1369px"></div><div class="t" style="left:2389px;top:1388.3px;font-size:25.3px">None</div>
<div class="t" style="left:2364px;top:1450.9px;font-size:24.9px;color:#a3abb4;font-weight:normal">Submit Type</div>
<div class="dd" style="top:1489px"></div><div class="t" style="left:2389px;top:1508.3px;font-size:25.3px">None</div>
<div class="t" style="left:2364px;top:1570.9px;font-size:24.9px;color:#a3abb4;font-weight:normal">Max Length</div>
<svg style="left:0;top:0" width="10" height="10"><path d="M2863.5 1033.5L2876.5 1046.5L2889.5 1033.5" fill="none" stroke="#9aa3ad" stroke-width="3.3" stroke-linecap="butt" stroke-linejoin="miter"/><path d="M2863.5 1153.5L2876.5 1166.5L2889.5 1153.5" fill="none" stroke="#9aa3ad" stroke-width="3.3" stroke-linecap="butt" stroke-linejoin="miter"/><path d="M2863.5 1273.5L2876.5 1286.5L2889.5 1273.5" fill="none" stroke="#9aa3ad" stroke-width="3.3" stroke-linecap="butt" stroke-linejoin="miter"/><path d="M2863.5 1393.5L2876.5 1406.5L2889.5 1393.5" fill="none" stroke="#9aa3ad" stroke-width="3.3" stroke-linecap="butt" stroke-linejoin="miter"/><path d="M2863.5 1513.5L2876.5 1526.5L2889.5 1513.5" fill="none" stroke="#9aa3ad" stroke-width="3.3" stroke-linecap="butt" stroke-linejoin="miter"/>
<circle cx="2440.5" cy="1106" r="10.8" fill="none" stroke="#6d757e" stroke-width="2"/><path d="M2440.5 1104.5V1112.5" stroke="#6d757e" stroke-width="2.4"/><circle cx="2440.5" cy="1100.4" r="1.5" fill="#6d757e"/><circle cx="2438" cy="1226" r="10.8" fill="none" stroke="#6d757e" stroke-width="2"/><path d="M2438 1224.5V1232.5" stroke="#6d757e" stroke-width="2.4"/><circle cx="2438" cy="1220.4" r="1.5" fill="#6d757e"/><circle cx="2535" cy="1346" r="10.8" fill="none" stroke="#6d757e" stroke-width="2"/><path d="M2535 1344.5V1352.5" stroke="#6d757e" stroke-width="2.4"/><circle cx="2535" cy="1340.4" r="1.5" fill="#6d757e"/><circle cx="2520.8" cy="1466" r="10.8" fill="none" stroke="#6d757e" stroke-width="2"/><path d="M2520.8 1464.5V1472.5" stroke="#6d757e" stroke-width="2.4"/><circle cx="2520.8" cy="1460.4" r="1.5" fill="#6d757e"/><circle cx="2513.2" cy="1586" r="10.8" fill="none" stroke="#6d757e" stroke-width="2"/><path d="M2513.2 1584.5V1592.5" stroke="#6d757e" stroke-width="2.4"/><circle cx="2513.2" cy="1580.4" r="1.5" fill="#6d757e"/><g fill="none" stroke="#d0885a" stroke-width="2.3" stroke-linecap="round"><circle cx="2546" cy="1578.2" r="3.6"/><path d="M2555.5 1578.2H2565.5M2542.5 1592H2552.5"/><circle cx="2562" cy="1592" r="3.6"/></g></svg>
<div class="a" style="left:2364.5px;top:1609px;width:263px;height:80px;border-radius:18px;background:#15181b;border:2px solid #30353c"></div>
<svg style="left:0;top:0" width="10" height="10"><path d="M2588 1632L2604.5 1648.5M2604.5 1632L2588 1648.5" stroke="#9aa3ad" stroke-width="2.8"/></svg>
<div class="a" style="left:2804px;top:1525px;width:96px;height:96px;border-radius:50%;background:#4a3ae6;box-shadow:0 4px 14px rgba(0,0,0,0.3)"></div>
<svg style="left:0;top:0" width="10" height="10"><path d="M2835 1548H2869a4 4 0 0 1 4 4V1597L2863 1592.5H2835a4 4 0 0 1-4-4V1552a4 4 0 0 1 4-4Z" fill="#fff"/><path d="M2838 1579.3Q2852 1587.5 2866 1579.3" fill="none" stroke="#4a3ae6" stroke-width="2.8" stroke-linecap="round"/></svg>

<!-- ===== TOP BAR ===== -->
<svg style="left:0;top:0" width="100" height="100"><path d="M40.4 28.3H76.2L69.4 43.4H34L33.2 40.9L40.4 28.3M52.6 28.6L62.1 51.9V54.9L55.3 66.2H31.5V63L37.9 53.2V51.9L34 43.4M37.9 51.9H62.1M37.9 53.6L43.4 66.2M32.3 66.2L36.6 74L43.4 67.3" fill="none" stroke="#4f3ef0" stroke-width="3.2" stroke-linejoin="round" stroke-linecap="round"/></svg>
<div class="t" style="left:131px;top:17.5px;font-size:27.5px;font-weight:bold;letter-spacing:0.85px">TestProject</div>
<div class="t" style="left:300px;top:22px;font-size:19px;color:#9aa3ad">Synced</div>
<svg style="left:0;top:0" width="10" height="10"><g class="ic" style="stroke-width:2"><path d="M133 61V75Q133 78 136 78H145M133 66.5H145"/><circle cx="148.5" cy="66.5" r="3.3"/><circle cx="148.5" cy="78" r="3.3"/></g></svg>
<div class="t" style="left:159px;top:61px;font-size:23.5px;color:#9aa3ad">main</div>
<svg style="left:0;top:0" width="10" height="10"><g transform="translate(240.5 59.5) scale(-1 1)"><path d="M14.7 6.3a1 1 0 0 0 0 1.4l1.6 1.6a1 1 0 0 0 1.4 0l3.77-3.77a6 6 0 0 1-7.94 7.94l-6.91 6.91a2.12 2.12 0 0 1-3-3l6.91-6.91a6 6 0 0 1 7.94-7.94l-3.76 3.76z" fill="none" stroke="#9aa3ad" stroke-width="2.1" stroke-linejoin="round"/></g></svg>
<div class="t" style="left:243px;top:61px;font-size:23.5px;color:#9aa3ad">Production</div>
<svg style="left:0;top:0" width="10" height="10"><circle cx="381" cy="70.5" r="10.5" fill="none" stroke="#5e2826" stroke-width="2.2"/><path d="M381 64.5v6.5" stroke="#5e2826" stroke-width="2.4" stroke-linecap="round"/><circle cx="381" cy="75.5" r="1.3" fill="#5e2826"/></svg>
<svg style="left:0;top:0" width="10" height="10"><circle cx="455.5" cy="52.5" r="17" fill="none" stroke="#fff" stroke-width="3"/><path d="M450.8 45.5a5.6 5.6 0 0 1 10.6 2c0 3.6-5.6 4.2-5.6 8.3" fill="none" stroke="#fff" stroke-width="3.2" stroke-linecap="round"/><circle cx="455.8" cy="60.2" r="2.1" fill="#fff"/></svg>
<svg style="left:0;top:0" width="10" height="10"><path d="M541.8 42v17a4.3 4.3 0 1 0 4.3-4.3H525.9a4.3 4.3 0 1 0 4.3 4.3V42a4.3 4.3 0 1 0-4.3 4.3h20.2a4.3 4.3 0 1 0-4.3-4.3" fill="none" stroke="#fff" stroke-width="3.3" stroke-linejoin="round"/></svg>
<svg style="left:0;top:0" width="10" height="10"><circle cx="611.6" cy="47" r="9.2" fill="none" stroke="#fff" stroke-width="3.8"/><path d="M619 54.5l9 9" stroke="#fff" stroke-width="4.5"/></svg>

<!-- right top pills -->
<div class="a" style="left:1888px;top:16px;width:122px;height:69.5px;border-radius:35px;background:linear-gradient(62deg,#eb955e 0%,#e8945c 32%,#b07ac0 52%,#5b4df3 72%,#5b4df3 100%);box-shadow:0 0 5px rgba(110,90,230,0.35)"></div>
<div class="a" style="left:1891px;top:19px;width:116px;height:63.5px;border-radius:32px;background:#15181b"></div>
<div class="a" style="left:1901px;top:31px;width:40px;height:40px;border-radius:50%;background:#6ccdb9"></div>
<svg style="left:0;top:0" width="10" height="10"><path d="M1910.8 53.2L1917.3 59.5L1932.2 44" fill="none" stroke="#fff" stroke-width="3.8" stroke-linecap="square" stroke-linejoin="miter"/></svg>
<svg style="left:0;top:0" width="10" height="10"><g transform="translate(1937.5 17.2) scale(0.665)"><path d="M40.4 28.3H76.2L69.4 43.4H34L33.2 40.9L40.4 28.3M52.6 28.6L62.1 51.9V54.9L55.3 66.2H31.5V63L37.9 53.2V51.9L34 43.4M37.9 51.9H62.1M37.9 53.6L43.4 66.2M32.3 66.2L36.6 74L43.4 67.3" fill="none" stroke="#fff" stroke-width="3.4" stroke-linejoin="round" stroke-linecap="round"/></g>
<path d="M1971 66L1984 53" stroke="#15181b" stroke-width="9" stroke-linecap="round"/>
<path d="M1973.8 63.3L1980.5 56.6" stroke="#fff" stroke-width="4.6" stroke-linecap="round"/><path d="M1974.3 62.8L1980 57.1" stroke="#15181b" stroke-width="1.6" stroke-linecap="round"/>
<g stroke="#fff" stroke-width="1.5" stroke-linecap="round"><path d="M1984.5 48.5V51M1984.5 54.5V57M1980.5 52.8H1983M1986 52.8H1988.5M1981.8 50L1983.2 51.4M1985.8 54.2L1987.2 55.6M1987.2 50L1985.8 51.4"/></g></svg>

<div class="a" style="left:2038px;top:19px;width:123px;height:63.5px;border-radius:32px;border:2px solid #33373f"></div>
<div class="a" style="left:2048px;top:30px;width:42px;height:42px;border-radius:50%;background:#6ccdb9"></div>
<svg style="left:0;top:0" width="10" height="10"><path d="M2058.5 53.2L2065.2 59.5L2080 43.6" fill="none" stroke="#fff" stroke-width="3.8" stroke-linecap="square" stroke-linejoin="miter"/></svg>
<svg style="left:0;top:0" width="10" height="10"><g fill="none" stroke="#fff" stroke-width="2.7" stroke-linejoin="round" stroke-linecap="round">
<path d="M2111.5 63L2113.2 56.8C2109.5 54 2107.5 50.8 2107.5 47.3C2107.5 40.8 2114.5 36.4 2123.4 36.4C2132.3 36.4 2139.3 40.8 2139.3 47.4C2139.3 54 2132.3 58.4 2123.4 58.4C2120.8 58.4 2118.4 58 2116.3 57.3Z"/>
<path d="M2115.2 44.9H2132.1M2115.2 51.9H2125.1"/>
<path d="M2138.3 52.8C2141.2 54.3 2142.8 56.6 2142.8 59.2C2142.8 61.2 2141.8 62.9 2140 64.3L2140 68.3L2135.2 65.6C2134.2 65.8 2133 66 2131.8 66C2127.6 66 2124.2 64.2 2122.6 61.2"/></g></svg>

<div class="a" style="left:2178px;top:19px;width:121.5px;height:63.5px;border-radius:32px;border:2px solid #33373f"></div>
<div class="a" style="left:2187.5px;top:30px;width:42.5px;height:42px;border-radius:50%;background:#4a3ae6"></div>
<div class="t" style="left:2187.5px;top:37px;width:42.5px;text-align:center;font-size:28px;font-weight:bold">2</div>
<svg style="left:0;top:0" width="10" height="10"><g fill="none" stroke="#fff" stroke-width="2.7" stroke-linejoin="round" stroke-linecap="round">
<path d="M2271.3 35.2L2258.6 51.2H2268.3L2266.7 67L2279.8 48.4H2270.3Z"/><path d="M2247.6 41.4H2257M2244.7 51H2253.2M2247.6 60.3H2257" stroke-width="3"/></g></svg>

<div class="a" style="left:2316px;top:19px;width:119.5px;height:63.5px;border-radius:32px;border:2px solid #33373f"></div>
<div class="a" style="left:2326px;top:30px;width:42px;height:42px;border-radius:50%;background:#f0a44c"></div>
<div class="t" style="left:2326px;top:37px;width:42px;text-align:center;font-size:28px;font-weight:bold">4</div>
<svg style="left:0;top:0" width="10" height="10"><g fill="none" stroke="#fff" stroke-width="2.6" stroke-linejoin="round" stroke-linecap="round">
<path d="M2398.8 42C2390.3 42 2386 49.5 2386 56.5C2386 64 2390.3 69.8 2398.8 69.8C2407.3 69.8 2411.6 64 2411.6 56.5C2411.6 49.5 2407.3 42 2398.8 42Z"/>
<path d="M2392.3 43C2393.3 39.2 2395.8 37.3 2398.8 37.3C2401.8 37.3 2404.3 39.2 2405.3 43"/><path d="M2398.8 42.5V69.5"/>
<path d="M2393 38.8L2390.3 35.8M2404.6 38.8L2407.3 35.8M2387.8 46.3L2385 43.3M2409.8 46.3L2412.6 43.3M2386 54H2382M2411.6 54H2415.6M2388 65.3L2385.3 68.3M2409.6 65.3L2412.3 68.3"/></g></svg>

<div class="btn" style="left:2452px;top:15px;width:72px;height:72px;border:2px solid #33373f"></div>
<svg style="left:0;top:0" width="10" height="10"><g fill="none" stroke="#fff" stroke-width="2.6" stroke-linecap="round"><path d="M2473.5 34.5V58.5q0 4 4 4h14.5M2473.5 42.5h18"/><circle cx="2497.5" cy="43" r="5.3"/><circle cx="2497.5" cy="62.5" r="5.3"/></g></svg>
<div class="btn" style="left:2540px;top:15px;width:72px;height:72px;border:2px solid #33373f"></div>
<svg style="left:0;top:0" width="10" height="10"><g fill="none" stroke="#fff" stroke-width="2.6" stroke-linecap="round" stroke-linejoin="round"><path d="M2567.5 45l-8 8 8 8M2584 45l8 8-8 8M2579.5 39.5l-9 26"/></g></svg>
<div class="btn" style="left:2628px;top:15px;width:72px;height:72px;border:2px solid #33373f"></div>
<svg style="left:0;top:0" width="10" height="10"><g fill="none" stroke="#fff" stroke-width="2.8" stroke-linecap="round" stroke-linejoin="round"><path d="M2660 36H2651Q2648 36 2648 39V65Q2648 68 2651 68H2677Q2680 68 2680 65V54"/><path d="M2662.5 53.5l14-14"/><path d="M2670.5 36h10v10z" fill="#fff"/></g></svg>
<div class="btn" style="left:2716px;top:15px;width:72px;height:72px;border:3px solid #e8956a;background:#654837"></div>
<svg style="left:0;top:0" width="10" height="10"><g fill="none" stroke="#fff" stroke-width="3.2"><path d="M2735.5 50.5c4.5-7 10.5-11.5 16.5-11.5s12 4.5 16.5 11.5c-4.5 7-10.5 11-16.5 11s-12-4-16.5-11z"/><circle cx="2752" cy="50.5" r="5.8"/></g></svg>
<div class="btn" style="left:2804px;top:15px;width:120px;height:72px;background:#4a3ae6"></div>
<div class="a" style="left:2872px;top:21px;width:2px;height:59px;background:#241c70"></div>
<svg style="left:0;top:0" width="10" height="10"><path d="M2835.1 34.1H2852.6L2846.6 46.8H2852.8L2840.4 67.6V53H2835.1z" fill="#fff"/><path d="M2890 46l7.5 7.5 7.5-7.5" fill="none" stroke="#fff" stroke-width="3.4" stroke-linecap="round" stroke-linejoin="round"/></svg>

</body></html>
